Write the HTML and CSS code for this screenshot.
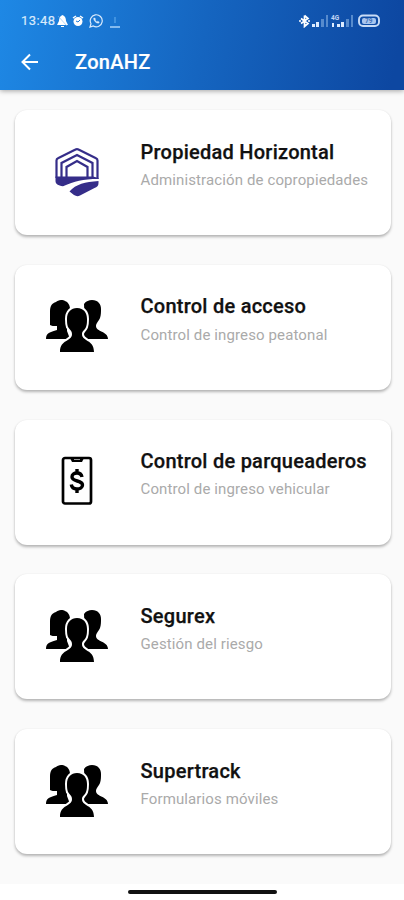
FILE: index.html
```html
<!DOCTYPE html>
<html lang="es">
<head>
<meta charset="UTF-8" />
<meta name="viewport" content="width=device-width, initial-scale=1" />
<title>ZonAHZ</title>
<link rel="stylesheet" href="styles.css">
</head>
<body>
  <svg class="sprite" aria-hidden="true">
    <symbol id="personas" viewBox="0 0 64 54">
      <path d="M5 26V12C5 7 7 4 11 3c1-1 3-2 5-2 2 0 3 0 4 1 3 1 5 4 5 8v13l-3 5v4l3 8H1c0-6 4-7 11-9v-4c-3 0-6 0-7-1z" />
      <path d="M39 5c2-3 5-4 8-4 6 0 9 4 9 9 0 3 0 6-1 9-1 3-4 5-4 8 0 6 12 5 12 13H38l2-12z" />
      <path class="frente" d="M32 9c7 0 10 5 10 11 0 3 0 5-1 8-1 3-4 4-4 7 0 8 12 5 12 18H15c0-13 12-10 12-18 0-3-2-4-4-7-1-3-1-5-1-8 0-7 4-11 10-11z" />
    </symbol>
  </svg>

  <header class="barra">
    <div class="estado">
      <span class="hora">13:48</span>
      <svg class="campana" width="11" height="12" viewBox="0 0 11 12"><path d="M5.500 0C3 1 2 3 2 6L0 10h11L9 6c0-3-1-5-3.500-6zM4 11h3v1H4z" fill="#fff" /><path d="M1 1l9 10" stroke="#7db7ef" stroke-width=".6" /></svg>
      <svg class="alarma" width="12" height="12" viewBox="0 0 12 12"><circle cx="6" cy="6.500" r="4.500" fill="#fff" /><path d="M1 3l3-2M11 3L8 1" stroke="#fff" stroke-width="1.500" /><path d="M4 6l2 1 2-2" fill="none" stroke="#1f7bd8" /></svg>
      <svg class="chat" width="14" height="14" viewBox="0 0 14 14" fill="none" stroke="#d9eafc"><path d="M1 13l1-3.300A6 6 0 1 1 4.300 12z" stroke-width="1.200" /><path d="M4.700 4c-.8 2 2.600 5.800 4.800 5.200.8-.2 1-1 .5-1.400L8.700 7.200l-.9.6L6.200 6l.4-.8-.6-1.300z" fill="#d9eafc" stroke-width=".3" /></svg>
      <svg class="descarga" width="10" height="12" viewBox="0 0 10 12"><path d="M5 1v6" stroke="#4c9ce6" stroke-width="1.500" /><path d="M0 11h10" stroke="#a9d2f8" stroke-width="1.500" /></svg>
      <svg class="conexion" width="93" height="14" viewBox="0 0 93 14">
        <path d="M5.500 1.500v11l3.500-3-7-5M2 9.500l7-5-3.500-3M0 7h2M9 7h2" fill="none" stroke="#fff" stroke-width="1.700" />
        <g fill="#dcebff"><path d="M13 10h3v3h-3zM17 8h3v5h-3z" /><path d="M33 9h2v4h-2zM38 10h3v3h-3zM42 8h3v5h-3z" /></g>
        <g fill="#578bcd"><path d="M22 5h3v8h-3zM27 1h2v12h-2zM47 5h3v8h-3zM52 1h2v12h-2z" /></g>
        <text x="32" y="6" class="red">4G</text>
        <rect x="60" y="1.500" width="20" height="10.500" rx="4" fill="none" stroke="#c9dcf6" stroke-width="1.900" />
        <rect x="63" y="4" width="14" height="6" rx="2" fill="#a8c5ee" />
        <text x="66" y="9.300" class="carga">79</text>
      </svg>
    </div>
    <div class="titulo">
      <svg class="volver" width="18" height="18" viewBox="0 0 18 18"><path d="M17 9H2M9 1.500L1.500 9 9 16.500" fill="none" stroke="#fff" stroke-width="2" /></svg>
      <h1>ZonAHZ</h1>
    </div>
  </header>

  <main class="lista">
    <article class="tarjeta">
      <div class="icono">
        <svg width="44" height="50" viewBox="0 0 44 50">
          <g fill="none" stroke="#352d89" stroke-width="2.200">
            <path d="M1.500 31V13.500Q1.500 12 3 11.300L20.500 2.500Q22 1.700 23.500 2.500L41 11.300Q42.500 12 42.500 13.500V32" />
            <path d="M6.500 30V16L22 8l15.500 8v14" />
            <path d="M11.500 30V20L22 14l10.500 6v10" />
          </g>
          <path d="M.5 29.500H38l5.500 1.500v1C27 32 20 34 8 39.200 3 38.500.5 37 .5 34z" fill="#352d89" />
          <path d="M14.500 44.500C21 37 30 35 43.500 34v2c0 3-1.500 4-4 5L25 48.500c-2 1-4 .8-6-.5z" fill="#352d89" />
        </svg>
      </div>
      <div class="texto">
        <h2>Propiedad Horizontal</h2>
        <p>Administración de copropiedades</p>
      </div>
    </article>

    <article class="tarjeta">
      <div class="icono"><svg width="64" height="54"><use href="#personas" /></svg></div>
      <div class="texto">
        <h2>Control de acceso</h2>
        <p>Control de ingreso peatonal</p>
      </div>
    </article>

    <article class="tarjeta">
      <div class="icono">
        <svg width="32" height="50" viewBox="0 0 32 50">
          <rect x="2" y="2" width="28" height="45.500" rx="2" fill="none" stroke="#000" stroke-width="2.700" />
          <path d="M9 2h14l-2 4H11z" />
          <path d="M13 3.500h6" stroke="#999" />
          <path d="M21 21c-.5-2.500-2-4-5-4s-5 1.500-5 4c0 5 10.500 3 10.500 8 0 2.500-2.300 4-5.500 4-3.300 0-5.300-1.500-5.700-4.500M16 13v4M16 33v4" fill="none" stroke="#000" stroke-width="3.400" />
        </svg>
      </div>
      <div class="texto">
        <h2>Control de parqueaderos</h2>
        <p>Control de ingreso vehicular</p>
      </div>
    </article>

    <article class="tarjeta">
      <div class="icono"><svg width="64" height="54"><use href="#personas" /></svg></div>
      <div class="texto">
        <h2>Segurex</h2>
        <p>Gestión del riesgo</p>
      </div>
    </article>

    <article class="tarjeta">
      <div class="icono"><svg width="64" height="54"><use href="#personas" /></svg></div>
      <div class="texto">
        <h2>Supertrack</h2>
        <p>Formularios móviles</p>
      </div>
    </article>
  </main>

  <footer class="navegacion">
    <div class="gesto"></div>
  </footer>
</body>
</html>
```
FILE: styles.css
```css
/* Base */
* {
  box-sizing: border-box;
}
body {
  margin: 0;
  height: 900px;
  display: flex;
  flex-direction: column;
  background: #fafafa;
  font-family: Roboto, "Liberation Sans", sans-serif;
  overflow: hidden;
}
h1, h2, p {
  margin: 0;
}
svg {
  display: block;
  flex: none;
}
.sprite {
  width: 0;
  height: 0;
}
/* Barra superior */
.barra {
  height: 90px;
  flex: none;
  background: linear-gradient(100deg, #1e88e5 0%, #1565c0 50%, #0d47a1 97%);
  box-shadow: 0 1px 5px rgba(0, 0, 0, 0.35);
  color: #fff;
}
.estado {
  display: flex;
  align-items: center;
  height: 41px;
  padding: 0 12px 0 21px;
}
.hora {
  width: 36px;
  font-size: 13px;
  letter-spacing: 0.4px;
  color: #d9eafc;
  -webkit-text-stroke: 0.2px #d9eafc;
}
.alarma {
  margin-left: 4px;
}
.chat {
  margin-left: 5px;
}
.descarga {
  margin: 2px 0 0 7px;
}
.conexion {
  margin-left: auto;
}
.red {
  font-size: 6.5px;
  font-weight: 700;
  fill: #c0d6f5;
}
.carga {
  font-size: 6.5px;
  font-weight: 700;
  fill: #3f70b8;
}
.titulo {
  display: flex;
  align-items: center;
  height: 41px;
  padding-left: 21px;
}
.titulo h1 {
  margin-left: 36px;
  font-size: 20px;
  font-weight: 500;
  line-height: 24px;
  letter-spacing: 0.3px;
  -webkit-text-stroke: 0.2px #fff;
}
/* Tarjetas */
.lista {
  height: 794px;
  flex: none;
  display: flex;
  flex-direction: column;
  gap: 29.75px;
  padding: 20px 13.5px 0 14.5px;
}
.tarjeta {
  height: 125px;
  flex: none;
  display: flex;
  border-radius: 12px;
  background: #fff;
  box-shadow: 0 2px 3px rgba(0, 0, 0, 0.28), 0 0 2px rgba(0, 0, 0, 0.06);
}
.icono {
  width: 125px;
  height: 123px;
  display: flex;
  align-items: center;
  justify-content: center;
}
.texto {
  padding: 29.6px 0 0 1px;
  white-space: nowrap;
}
.texto h2 {
  font-size: 20px;
  font-weight: 500;
  line-height: 24px;
  letter-spacing: 0.25px;
  color: #111;
  -webkit-text-stroke: 0.25px #111;
}
.texto p {
  margin-top: 7.4px;
  font-size: 15px;
  line-height: 18px;
  letter-spacing: 0.12px;
  color: #aaa;
}
.frente {
  stroke: #fff;
  stroke-width: 4px;
  paint-order: stroke;
}
/* Barra de gestos */
.navegacion {
  height: 16px;
  flex: none;
  display: flex;
  justify-content: center;
  padding-top: 6px;
  background: #fff;
}
.gesto {
  width: 149px;
  height: 4px;
  border-radius: 2px;
  background: #111;
}
```
